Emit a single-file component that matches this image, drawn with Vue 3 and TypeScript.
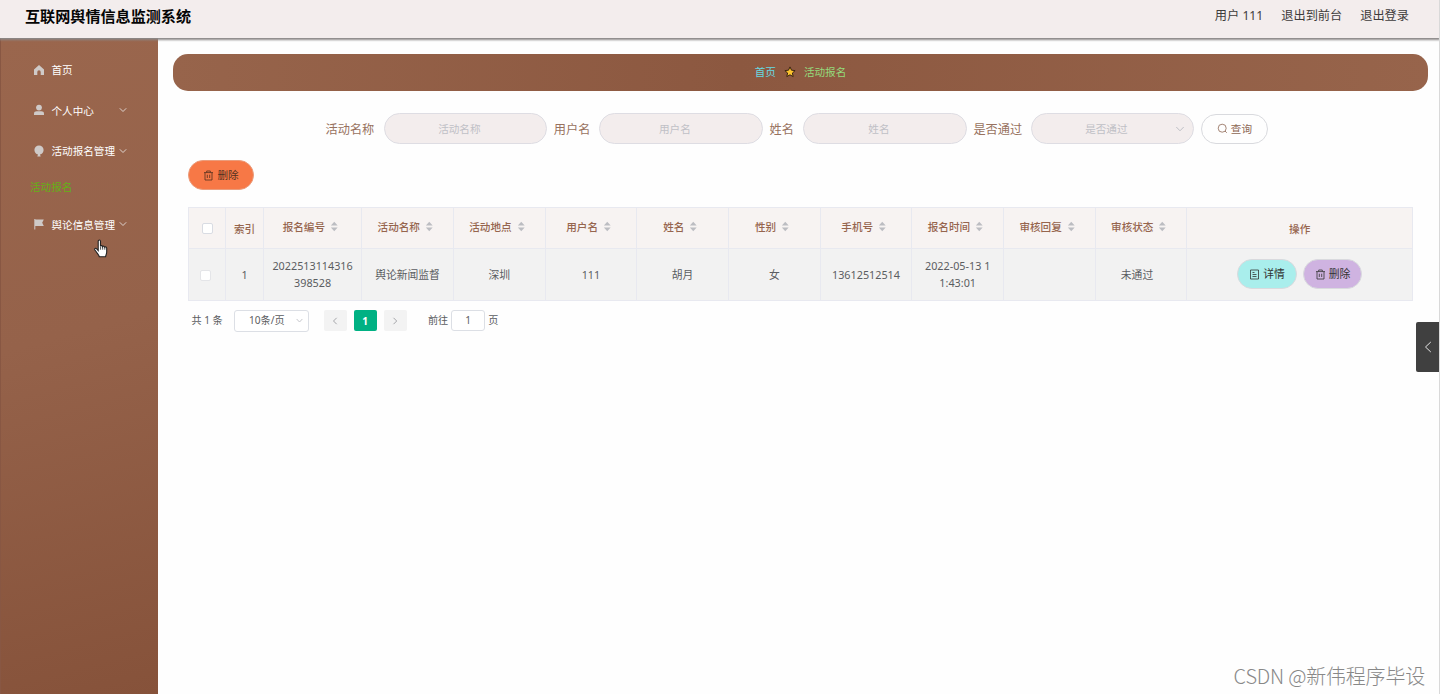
<script setup lang="ts">
interface MenuEntry { label: string; icon: string; arrow: boolean; child?: string }
interface Field { label: string; select?: boolean; labelWidth: number }
interface Column { label: string; width: number; value: string[]; sortable: boolean; tag?: boolean }

const menu: MenuEntry[] = [
  { label: '首页', icon: 'home', arrow: false },
  { label: '个人中心', icon: 'user', arrow: true },
  { label: '活动报名管理', icon: 'balloon', arrow: true, child: '活动报名' },
  { label: '舆论信息管理', icon: 'flag', arrow: true },
]

const fields: Field[] = [
  { label: '活动名称', labelWidth: 58 },
  { label: '用户名', labelWidth: 45.3 },
  { label: '姓名', labelWidth: 33.7 },
  { label: '是否通过', labelWidth: 57.2, select: true },
]

const columns: Column[] = [
  { label: '索引', width: 38, value: ['1'], sortable: false },
  { label: '报名编号', width: 98.2, value: ['2022513114316', '398528'], sortable: true },
  { label: '活动名称', width: 91.7, value: ['舆论新闻监督'], sortable: true },
  { label: '活动地点', width: 91.7, value: ['深圳'], sortable: true },
  { label: '用户名', width: 91.7, value: ['111'], sortable: true },
  { label: '姓名', width: 91.7, value: ['胡月'], sortable: true },
  { label: '性别', width: 91.7, value: ['女'], sortable: true },
  { label: '手机号', width: 91.7, value: ['13612512514'], sortable: true },
  { label: '报名时间', width: 91.7, value: ['2022-05-13 1', '1:43:01'], sortable: true },
  { label: '审核回复', width: 91.7, value: [], sortable: true },
  { label: '审核状态', width: 91.7, value: ['未通过'], sortable: true, tag: true },
]

const gridStyle = {
  gridTemplateColumns: `37px ${columns.map((c) => `${c.width}px`).join(' ')} 1fr`,
}
</script>

<template>
  <div class="page">
    <header class="topbar">
      <h1>互联网舆情信息监测系统</h1>
      <nav>
        <span>用户 111</span>
        <span>退出到前台</span>
        <span>退出登录</span>
      </nav>
    </header>

    <div class="body">
      <aside class="sidebar">
        <template v-for="item in menu" :key="item.label">
          <div class="menu-item">
            <svg class="menu-icon" viewBox="0 0 12 12">
              <path v-if="item.icon === 'home'" d="M6 1 1 5.4V11h3.300V8a1.700 1.700 0 0 1 3.400 0v3H11V5.400z" />
              <template v-else-if="item.icon === 'user'">
                <circle cx="6" cy="3.600" r="2.900" />
                <path d="M1 11V9.600C1 8 2.200 7.200 3.600 7.200h4.800C9.800 7.200 11 8 11 9.600V11z" />
              </template>
              <path v-else-if="item.icon === 'balloon'" d="M6 .5a4.600 4.600 0 0 0-4.600 4.600C1.400 7.400 3 9.200 5 9.600l-.7 1.800h3.400L7 9.600c2-.4 3.600-2.200 3.600-4.500A4.600 4.600 0 0 0 6 .5z" />
              <path v-else d="M1.300 1h1v.5h8.500L9.200 4.800l1.600 3.100H2.300V11.500h-1z" />
            </svg>
            <span class="menu-label">{{ item.label }}</span>
            <svg v-if="item.arrow" class="menu-arrow" viewBox="0 0 8 8"><path d="M.8 2.300 4 5.500l3.200-3.200" /></svg>
          </div>
          <div v-if="item.child" class="submenu">{{ item.child }}</div>
        </template>
        <svg class="cursor" viewBox="0 0 14 19">
          <path d="M4.200 11.500V2.300c0-1.700 2.300-1.700 2.300 0v5c.3-1 2-.8 2.100.3.500-.8 2-.5 2.100.6.800-.6 2-.1 2 1V13c0 2-.8 2.500-1.100 4.700H5.300C4.900 15.700 2.500 13.500.9 11c-.8-1.500.8-2.300 1.800-1.200z" />
          <path class="cursor-lines" d="M6.600 7.500v3.200M8.700 8v2.700M10.800 8.500v2.200" />
        </svg>
      </aside>

      <main class="main">
        <div class="crumbs">
          <span class="crumb-home">首页</span>
          <svg class="star" viewBox="0 0 12 12"><path d="M6 .9 7.500 4.200l3.600.4-2.700 2.400.8 3.600L6 8.800l-3.200 1.800.8-3.600L.9 4.600l3.600-.4z" /></svg>
          <span class="crumb-current">活动报名</span>
        </div>

        <div class="search">
          <div v-for="f in fields" :key="f.label" class="field">
            <label :style="{ width: f.labelWidth + 'px' }">{{ f.label }}</label>
            <div class="input" :class="{ select: f.select }">
              <span>{{ f.label }}</span>
              <svg v-if="f.select" class="select-arrow" viewBox="0 0 10 10"><path d="m1.300 3 3.700 3.800L8.700 3" /></svg>
            </div>
          </div>
          <button class="btn query">
            <svg class="btn-icon" viewBox="0 0 11 11"><circle cx="5.200" cy="5.200" r="4" /><path d="m8 8 1.800 1.800" /></svg>
            <span>查询</span>
          </button>
        </div>

        <div class="content">
          <button class="btn bulk">
            <svg class="btn-icon" viewBox="0 0 11 11"><path d="M1 2.600h9M3.700 2.500V1h3.600v1.500M2 2.700V10h7V2.700M4.300 4.700v3.300M6.700 4.700v3.300" /></svg>
            <span>删除</span>
          </button>

          <div class="table">
            <div class="row head" :style="gridStyle">
              <div class="cell"><i class="check" /></div>
              <div v-for="c in columns" :key="c.label" class="cell" :class="{ sortable: c.sortable }">
                <span>{{ c.label }}</span>
                <svg v-if="c.sortable" class="sort" viewBox="0 0 8 12"><path d="M4 .8 7.700 5H.3zM4 11.200.3 7h7.400z" /></svg>
              </div>
              <div class="cell">操作</div>
            </div>
            <div class="row data" :style="gridStyle">
              <div class="cell first"><i class="check" /></div>
              <div v-for="c in columns" :key="c.label" class="cell" :class="{ tag: c.tag }">
                <div><div v-for="line in c.value" :key="line">{{ line }}</div></div>
              </div>
              <div class="cell actions">
                <button class="btn detail">
                  <svg class="btn-icon" viewBox="0 0 11 11"><path d="M1.500 1h8v9h-8zM3.500 3.500h2M3.500 5.500h4M3.500 7.500h4" /></svg>
                  <span>详情</span>
                </button>
                <button class="btn remove">
                  <svg class="btn-icon" viewBox="0 0 11 11"><path d="M1 2.600h9M3.700 2.500V1h3.600v1.500M2 2.700V10h7V2.700M4.300 4.700v3.300M6.700 4.700v3.300" /></svg>
                  <span>删除</span>
                </button>
              </div>
            </div>
          </div>

          <div class="pager">
            <span class="total">共 1 条</span>
            <div class="size">
              <span>10条/页</span>
              <svg viewBox="0 0 10 10"><path d="m1.800 3.300 3.200 3.400 3.200-3.400" /></svg>
            </div>
            <div class="page-btn"><svg viewBox="0 0 10 10"><path d="M6.700 1.800 3.500 5l3.200 3.200" /></svg></div>
            <div class="page-btn current">1</div>
            <div class="page-btn"><svg viewBox="0 0 10 10"><path d="M3.500 1.800 6.700 5 3.500 8.200" /></svg></div>
            <span class="goto">前往</span>
            <div class="goto-input">1</div>
            <span>页</span>
          </div>
        </div>
      </main>
    </div>

    <div class="drawer-tab"><svg viewBox="0 0 8 12"><path d="M6.800 1 1.500 6l5.300 5" /></svg></div>
    <div class="watermark">CSDN @新伟程序毕设</div>
  </div>
</template>

<style>
body { margin: 0; overflow: hidden; }
</style>

<style scoped>
* { box-sizing: border-box; }
.page {
  position: relative;
  width: 1440px;
  height: 694px;
  display: flex;
  flex-direction: column;
  overflow: hidden;
  background: #fefefe;
  border-right: 1px solid #d9d9d9;
  font-family: "Noto Sans", "Noto Sans CJK SC", sans-serif;
  font-size: 10.6px;
  color: #5b5d61;
}
svg { display: block; flex: none; fill: none; stroke: currentColor; }
.topbar {
  position: relative;
  z-index: 1;
  flex: none;
  height: 38px;
  padding: 0 30px 6px 25px;
  display: flex;
  align-items: center;
  justify-content: space-between;
  background: #f3eded;
  box-shadow: 0 1px 2px 1px #8b8888;
}
h1 { margin: 0; font-size: 15.1px; line-height: 20px; font-weight: 700; color: #050505; white-space: nowrap; }
.topbar nav { display: flex; gap: 18px; font-size: 12.2px; line-height: 20px; color: #3d3b3b; white-space: nowrap; }
.body { flex: 1; display: flex; min-height: 0; }
.sidebar {
  position: relative;
  flex: none;
  width: 158px;
  padding-top: 11.5px;
  border-left: 1px solid #885743;
  background: linear-gradient(165deg, #9a664d 0%, #95624a 45%, #86523a 100%);
  color: #fff;
}
.menu-item { height: 40.500px; padding-left: 32px; display: flex; align-items: center; }
.menu-icon { width: 12px; height: 12px; fill: #cfcac8; stroke: none; }
.menu-label { width: 67.500px; margin-left: 6.500px; white-space: nowrap; }
.menu-arrow { width: 8px; height: 8px; color: #ded3ce; }
.submenu { height: 33px; line-height: 33px; padding-left: 29px; color: #64b116; }
.cursor { position: absolute; left: 93px; top: 200.500px; width: 14px; height: 19px; fill: #fff; stroke: #222; stroke-width: 1.1; }
.cursor-lines { stroke-width: .8; }
.main { flex: 1; min-width: 0; padding: 15.500px 11px 0 15px; }
.crumbs {
  height: 37.500px;
  padding-bottom: 1px;
  display: flex;
  align-items: center;
  justify-content: center;
  border-radius: 15px;
  background: linear-gradient(90deg, #97644b, #8c5840 45%, #97644b);
}
.crumb-home { color: #66d9e2; }
.crumb-current { color: #94db7c; }
.star { width: 12px; height: 12px; margin: 1px 8px 0; fill: #fcc42e; stroke: #3a2412; stroke-width: 1; }
.search { height: 30px; margin-top: 22.500px; display: flex; justify-content: center; }
.field { display: flex; align-items: center; margin-right: 6.800px; }
.field label { flex: none; font-size: 12.200px; color: #98725f; white-space: nowrap; }
.input {
  position: relative;
  width: 163.500px;
  height: 30.500px;
  padding: 0 12px 0 0;
  display: flex;
  align-items: center;
  justify-content: center;
  border: 1px solid #dedde3;
  border-radius: 16px;
  background: #f3eded;
  color: #c0c0c6;
}
.select-arrow { position: absolute; right: 8px; top: 10px; width: 10px; height: 10px; color: #bfc0c6; }
.btn {
  flex: none;
  height: 30px;
  padding: 0 0 1px;
  display: flex;
  align-items: center;
  justify-content: center;
  gap: 3px;
  border: 1px solid #d9dade;
  border-radius: 16px;
  font: inherit;
  color: #333;
  white-space: nowrap;
}
.btn-icon { width: 11px; height: 11px; margin-top: 1px; stroke-width: .8; }
.query { width: 67px; margin-right: 7.500px; background: #fefefe; color: #8d6653; }
.content { padding: 16.500px 15px 0; }
.bulk { width: 66px; background: #f77846; border-color: #eb9c7b; color: #50301f; }
.table { margin-top: 17px; border: 1px solid #e8e9f0; border-right: 0; border-bottom: 0; }
.row { display: grid; }
.cell {
  display: flex;
  align-items: center;
  justify-content: center;
  min-width: 0;
  border-right: 1px solid #e8e9f0;
  border-bottom: 1px solid #e8e9f0;
  text-align: center;
  white-space: nowrap;
}
.head { height: 41px; background: #f7f3f2; color: #96654e; font-weight: 500; }
.sortable { padding: 0 3px 3px 0; }
.sort { width: 8.500px; height: 11px; margin: 0 1px 0 5px; fill: #bcbdc2; stroke: none; }
.data { height: 52px; background: #f2f2f2; font-size: 10.800px; line-height: 17px; }
.data .cell { padding-bottom: 1px; }
.data .tag { padding-right: 8px; }
.check { width: 11px; height: 11px; border: 1px solid #d9dce3; border-radius: 2px; background: #fff; }
.first { padding-right: 3px; }
.first .check { margin-top: 2px; border-color: #e4e5e8; }
.actions { gap: 6px; }
.actions .btn { width: 59.500px; }
.detail { background: #a9eeec; }
.remove { background: #cfb3e1; }
.pager { height: 22px; margin: 8.500px 0 0 3.500px; display: flex; align-items: center; font-size: 10.100px; line-height: 14px; white-space: nowrap; }
.total { width: 42.500px; }
.pager > span { padding-bottom: 1px; }
.size {
  width: 75px;
  height: 22px;
  padding: 0 4px 1px 14px;
  display: flex;
  align-items: center;
  justify-content: space-between;
  border: 1px solid #dcdfe5;
  border-radius: 3px;
  background: #fff;
}
.size svg { width: 9px; height: 9px; color: #bfc1c6; }
.page-btn { width: 22.500px; height: 21.500px; margin-left: 7.500px; display: flex; align-items: center; justify-content: center; border-radius: 2px; background: #f3f3f3; color: #a5a6aa; }
.size + .page-btn { margin-left: 15px; }
.page-btn svg { width: 10px; height: 10px; }
.pager .current { background: #00b183; color: #fff; font-weight: 700; }
.goto { margin-left: 21.500px; }
.goto-input { width: 34px; height: 21.500px; margin: 0 3px; padding-bottom: 1px; display: flex; align-items: center; justify-content: center; border: 1px solid #dcdfe5; border-radius: 3px; background: #fff; }
.drawer-tab {
  position: absolute;
  right: -1px;
  top: 322px;
  width: 24px;
  height: 50px;
  display: flex;
  align-items: center;
  justify-content: center;
  border-radius: 2px 0 0 2px;
  background: #404040;
  color: #e6e6e6;
}
.drawer-tab svg { width: 8px; height: 12px; }
.watermark {
  position: absolute;
  right: 14px;
  bottom: 4px;
  font-family: "Noto Sans CJK SC", sans-serif;
  font-size: 20px;
  font-weight: 300;
  line-height: 28px;
  letter-spacing: -.2px;
  color: #888;
  white-space: nowrap;
}
</style>
